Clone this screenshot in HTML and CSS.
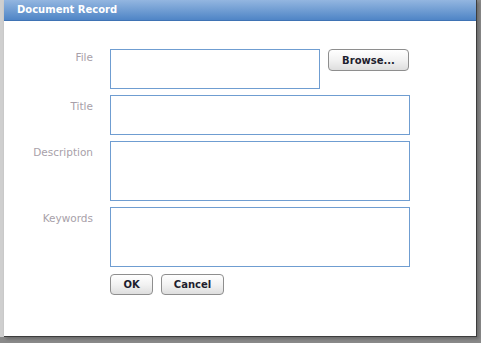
FILE: index.html
```html
<!DOCTYPE html>
<html lang="en">

<head>
    <meta charset="UTF-8">
    <link rel="stylesheet" href="styles.css">
</head>

<body>
    <div class="page">
        <div class="strip"></div>
        <div class="dialog">
            <div class="title-bar">Document Record</div>

            <div class="form">
                <label class="field-label field-label-file" for="file">File</label>
                <div class="file-row">
                    <textarea id="file" class="box box-file"></textarea>
                    <button class="btn btn-browse">Browse...</button>
                </div>

                <label class="field-label" for="title">Title</label>
                <textarea id="title" class="box box-title"></textarea>

                <label class="field-label" for="description">Description</label>
                <textarea id="description" class="box box-tall"></textarea>

                <label class="field-label" for="keywords">Keywords</label>
                <textarea id="keywords" class="box box-tall"></textarea>

                <div></div>
                <div class="actions">
                    <button class="btn btn-ok">OK</button>
                    <button class="btn btn-cancel">Cancel</button>
                </div>
            </div>
        </div>
    </div>
</body>

</html>
```

FILE: styles.css
```css
html,
body {
    margin: 0;
    padding: 0;
    background-color: #8a8a8a;
}

body {
    width: 481px;
    height: 343px;
    overflow: hidden;
    font-family: "DejaVu Sans", Verdana, sans-serif;
}

.page {
    display: flex;
    height: 337px;
}

.strip {
    width: 4px;
    background-color: #cfcfcf;
}

.dialog {
    width: 472px;
    background-color: #fff;
    border-right: 1px solid #3c3c3c;
    border-bottom: 1px solid #3c3c3c;
    box-shadow: 2px 2px 3px #6a6a6a;
}

.title-bar {
    height: 20px;
    line-height: 20px;
    padding-left: 13px;
    border-bottom: 1px solid #3f73b4;
    background: linear-gradient(to bottom, #93b6e0, #4f85c6);
    color: #fff;
    font-size: 10px;
    font-weight: bold;
}

.form {
    display: grid;
    grid-template-columns: 89px 300px;
    column-gap: 17px;
    row-gap: 6px;
    padding-top: 28px;
}

.field-label {
    text-align: right;
    font-size: 10.5px;
    color: #a89fa9;
    padding-top: 5px;
}

.field-label-file {
    padding-top: 2px;
}

.file-row {
    display: flex;
    align-items: flex-start;
    gap: 8px;
}

.box {
    box-sizing: border-box;
    border: 1px solid #6f9dd1;
    padding: 2px;
    resize: none;
    outline: none;
    font-family: inherit;
    font-size: 11px;
    background-color: #fff;
}

.box-file {
    width: 210px;
    height: 40px;
}

.box-title {
    width: 300px;
    height: 40px;
}

.box-tall {
    width: 300px;
    height: 60px;
}

.actions {
    display: flex;
    gap: 8px;
    padding-top: 1px;
}

.btn {
    box-sizing: border-box;
    height: 21px;
    padding: 0;
    border: 1px solid #8e8e8e;
    border-radius: 4px;
    background: linear-gradient(to bottom, #ffffff, #f2f2f2 50%, #dedede);
    color: #1e1e2e;
    font-family: inherit;
    font-size: 10px;
    font-weight: bold;
}

.btn-browse {
    width: 81px;
    height: 22px;
}

.btn-ok {
    width: 43px;
}

.btn-cancel {
    width: 63px;
}
```
